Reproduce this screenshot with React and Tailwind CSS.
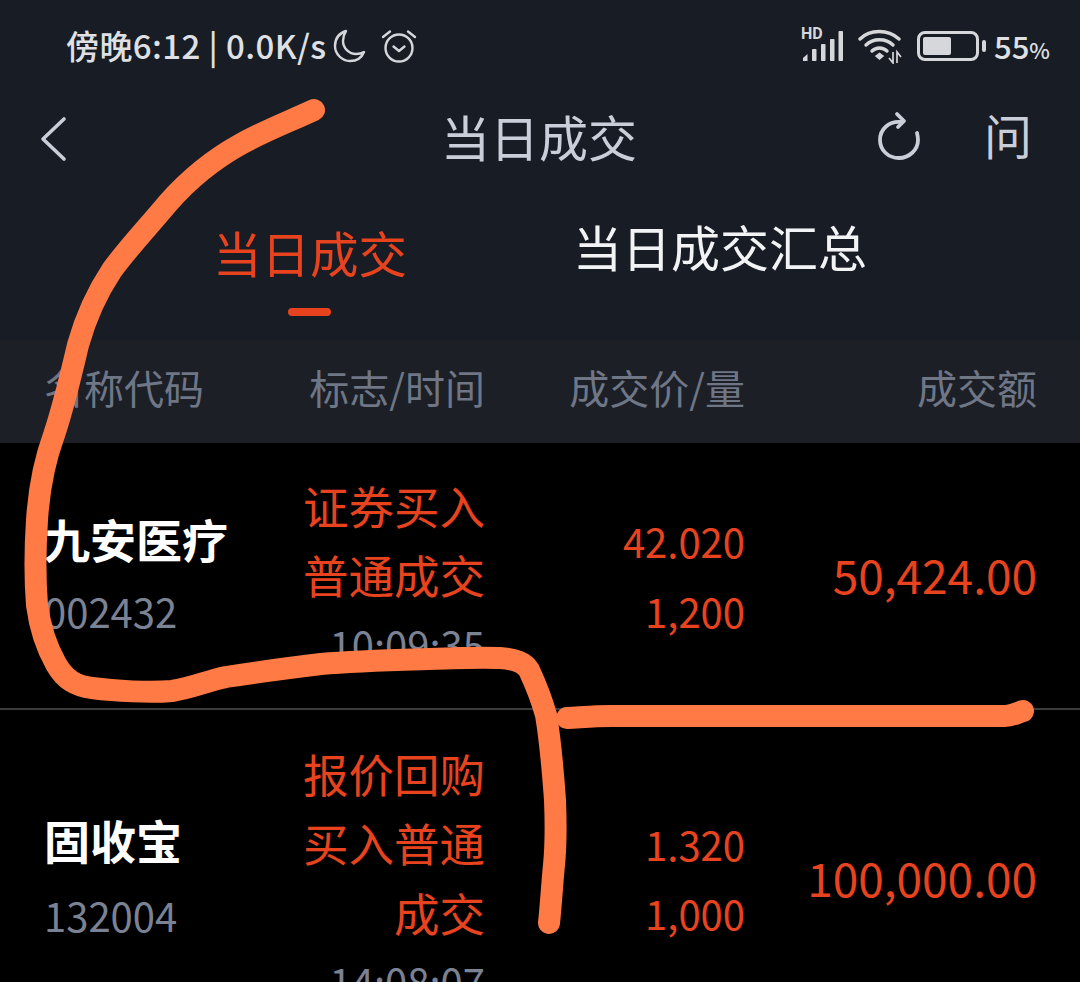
const Stroke = () => (
  <svg className="absolute left-0 top-0 pointer-events-none" width="1080" height="982" viewBox="0 0 1080 982" fill="none">
    <path d="M314 110 C288 122 264 131 241 144 C212 160 190 178 168 203 C148 227 128 248 112 270 C96 294 85 320 78 345 C71 375 64 405 54 435 C44 462 39 490 37 520 C35 550 35 580 37 605 C40 628 47 648 56 664 C65 680 76 686 92 688 C115 691 150 693 172 691 C192 688 207 681 226 677 C258 672 288 668 321 664 C355 661 395 660 429 659 C455 658 482 657 500 658 C515 659 524 662 529 670 C535 683 541 697 546 715 C551 745 553 772 555 800 C556 825 556 845 554 865 C552 885 551 905 549 923" stroke="#ff7a45" strokeWidth="22" strokeLinecap="round" strokeLinejoin="round" />
    <path d="M567 718 C585 717 595 716 611 716 L1005 716 C1012 716 1017 713 1023 711" stroke="#ff7a45" strokeWidth="22" strokeLinecap="round" strokeLinejoin="round" />
  </svg>
);

const Moon = () => (
  <svg width="36" height="36" viewBox="0 0 36 36" fill="none" stroke="#d4d6da" strokeWidth="2.4" strokeLinejoin="round" strokeLinecap="round">
    <path d="M14 3 C8 5 3 10 3 18 C3 26 10 33 18 33 C25 33 30 29 32 24 C29 26 27 26 24 26 C17 26 11 20 11 13 C11 9 12 6 14 3 Z" />
  </svg>
);

const Alarm = () => (
  <svg width="36" height="36" viewBox="0 0 36 36" fill="none" stroke="#d4d6da" strokeWidth="2.4" strokeLinecap="round" strokeLinejoin="round">
    <circle cx="18" cy="20" r="13.5" />
    <path d="M2 9 L9 3.5 M34 9 L27 3.5" />
    <path d="M12.5 18.5 L18 23 L23.5 18.5" />
  </svg>
);

const Signal = () => (
  <div className="relative w-[44px] h-[34px]">
    <span className="absolute left-0 top-[-5px] text-[16px] leading-[20px] font-bold text-[#d6d7da] font-['Roboto',sans-serif]">HD</span>
    <svg width="44" height="34" viewBox="0 0 44 34" fill="#d6d7da">
      <path d="M2 32 L2 29 L6.5 25 L6.5 32 Z" />
      <rect x="11" y="20" width="4.5" height="12" rx="0.8" />
      <rect x="20" y="15" width="4.5" height="17" rx="0.8" />
      <rect x="29" y="10" width="4.5" height="22" rx="0.8" />
      <rect x="37.500" y="2" width="4.5" height="30" rx="0.8" />
    </svg>
  </div>
);

const Wifi = () => (
  <svg width="44" height="36" viewBox="0 0 44 36" fill="none" stroke="#d6d7da" strokeWidth="3.4" strokeLinecap="round">
    <path d="M2 11 C12 1 30 1 41 11" />
    <path d="M8 17 C15 10 28 10 35 17" />
    <path d="M14 23 C18 19 25 19 29 23" />
    <path d="M18 28 L21.500 25.500 L25 28 L21.500 31 Z" fill="#d6d7da" strokeWidth="1.5" />
    <path d="M35 24 L35 35 L31 30 M39 35 L39 24 L43 29" strokeWidth="1.700" strokeLinecap="butt" />
  </svg>
);

const Battery = () => (
  <div className="flex items-center gap-[3px]">
    <div className="w-[62px] h-[30px] rounded-[8px] border-[3.5px] border-[#d6d7da] p-[3px] flex">
      <div className="w-[28px] h-full rounded-[2px] bg-[#d6d7da]" />
    </div>
    <div className="w-[4px] h-[12px] rounded-full bg-[#d6d7da]" />
  </div>
);

const Back = () => (
  <svg width="30" height="50" viewBox="0 0 30 50" fill="none" stroke="#c9ced9" strokeWidth="3.6" strokeLinecap="round" strokeLinejoin="round">
    <path d="M25 5 L4 25 L25 45" />
  </svg>
);

const Refresh = () => (
  <svg width="44" height="50" viewBox="0 0 44 50" fill="none" stroke="#c9ced9" strokeWidth="3.8" strokeLinecap="round" strokeLinejoin="round">
    <path d="M24 11 C12 10 3 18 3 29 C3 39 11 47 22 47 C32 47 41 39 41 29 C41 26 40.500 24 40 22" />
    <path d="M20 3 L27 10 L21 16" />
  </svg>
);

const Row = ({ name, code, flags, time, price, qty, amount, h, nameGap }) => (
  <div className={`grid grid-cols-[220px_221px_260px_292px] items-center px-[44px] ${h}`}>
    <div className={`flex flex-col ${nameGap}`}>
      <div className="text-[46px] leading-[70px] font-bold text-white whitespace-nowrap">{name}</div>
      <div className="text-[40px] leading-[70px] text-[#7b8294]">{code}</div>
    </div>
    <div className="flex flex-col items-end text-right pt-[2px]">
      {flags.map((f) => (
        <div key={f} className="text-[45.500px] leading-[69.500px] text-[#e8431f] whitespace-nowrap">{f}</div>
      ))}
      <div className="text-[40px] leading-[69.500px] text-[#7b8294]">{time}</div>
    </div>
    <div className="flex flex-col items-end pt-[5px]">
      <div className="text-[40px] leading-[69.500px] text-[#e8431f]">{price}</div>
      <div className="text-[40px] leading-[69.500px] text-[#e8431f]">{qty}</div>
    </div>
    <div className="text-right text-[46px] leading-[70px] text-[#e8431f]">{amount}</div>
  </div>
);

export default function App() {
  return (
    <div className="relative w-[1080px] h-[982px] overflow-hidden bg-[#181c25] font-['Noto_Sans_CJK_SC','Noto_Sans',sans-serif]">
      <div className="h-[92px] flex items-center justify-between pl-[66px] pr-[30px]">
        <div className="flex items-center">
          <span className="text-[33px] font-medium tracking-[0.4px] text-[#dfe0e3] whitespace-nowrap">傍晚6:12 | 0.0K/s</span>
          <div className="ml-[6px]"><Moon /></div>
          <div className="ml-[13px]"><Alarm /></div>
        </div>
        <div className="flex items-center">
          <Signal />
          <div className="ml-[13px]"><Wifi /></div>
          <div className="ml-[15px]"><Battery /></div>
          <span className="ml-[8px] text-[31px] font-medium text-[#dfe0e3]">55<span className="text-[22px]">%</span></span>
        </div>
      </div>

      <div className="h-[94px] grid grid-cols-[1fr_auto_1fr] items-center pl-[39px] pr-[48px]">
        <Back />
        <div className="mb-[6px] ml-[7px] text-[49px] text-[#c9ced9]">当日成交</div>
        <div className="mb-[6px] flex items-center justify-end gap-[63px]">
          <Refresh />
          <div className="mb-[4px] text-[48px] text-[#c9ced9]">问</div>
        </div>
      </div>

      <div className="h-[154px] flex justify-center gap-[166px] pr-[0px]">
        <div className="flex flex-col items-center pt-[31px]">
          <div className="text-[48.500px] leading-[70px] text-[#e8431f]">当日成交</div>
          <div className="mt-[21px] w-[43px] h-[8px] rounded-full bg-[#e8431f]" />
        </div>
        <div className="pt-[25px] text-[49px] leading-[70px] text-[#f2f3f5]">当日成交汇总</div>
      </div>

      <div className="h-[103px] pb-[10px] grid grid-cols-[220px_221px_260px_292px] items-center px-[44px] bg-[#1c1f26] text-[40px] text-[#6f7686]">
        <div>名称代码</div>
        <div className="text-right">标志/时间</div>
        <div className="text-right">成交价/量</div>
        <div className="text-right">成交额</div>
      </div>

      <div className="bg-black h-[539px]">
        <Row name="九安医疗" code="002432" flags={["证券买入", "普通成交"]} time="10:09:35" price="42.020" qty="1,200" amount="50,424.00" h="h-[265px] pb-[3px]" nameGap="gap-[3px]" />
        <div className="h-[2px] bg-[#3a3b3d]" />
        <Row name="固收宝" code="132004" flags={["报价回购", "买入普通", "成交"]} time="14:08:07" price="1.320" qty="1,000" amount="100,000.00" h="h-[340px] pb-[7px]" nameGap="gap-[6px]" />
      </div>

      <Stroke />
    </div>
  );
}
